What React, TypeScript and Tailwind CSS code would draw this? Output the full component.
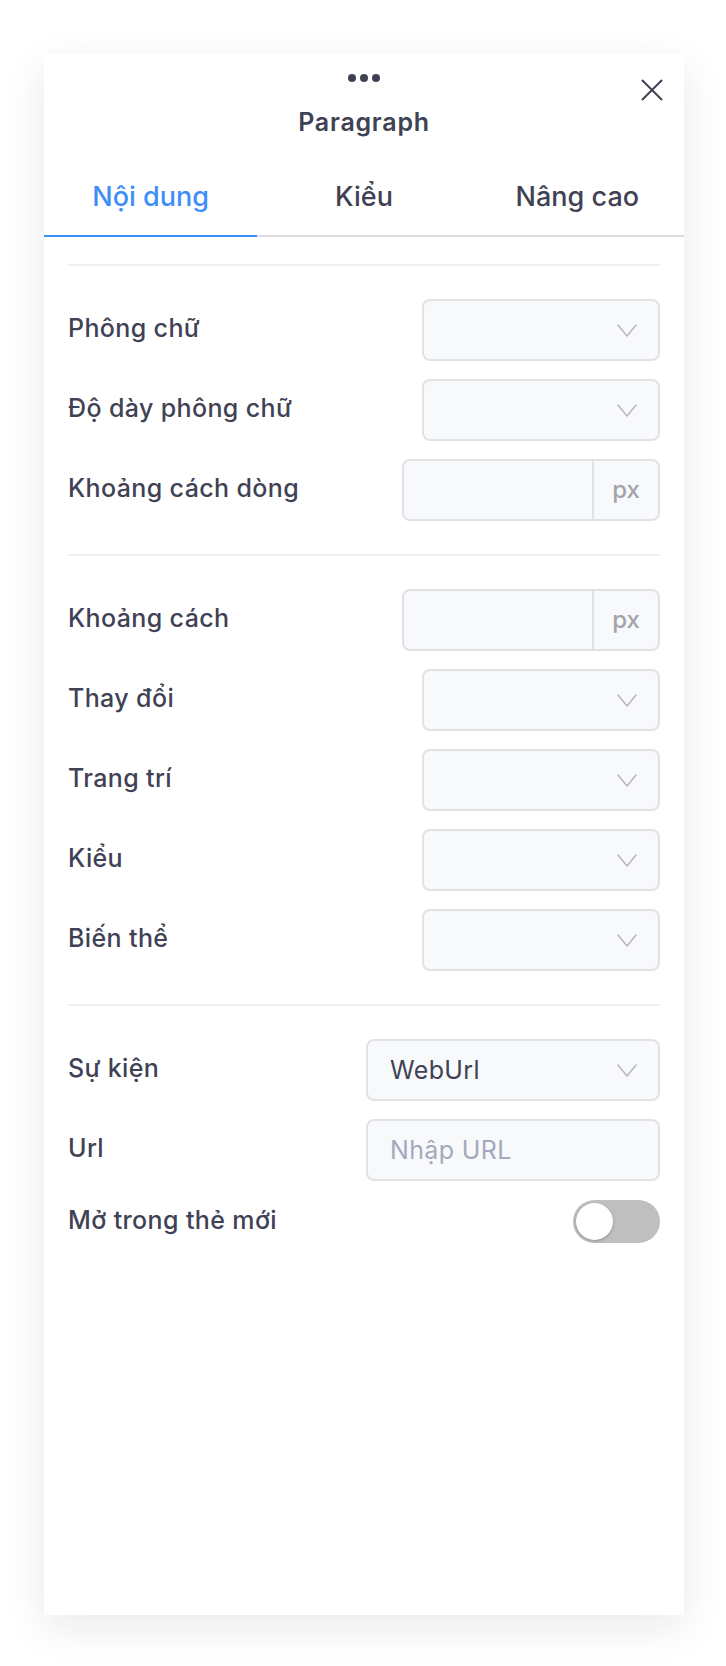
import React from "react";

const Chevron = () => (
  <svg width="20" height="13" viewBox="0 0 20 13" fill="none" className="shrink-0">
    <polyline points="1,1 10,12 19,1" stroke="#b8b9c2" strokeWidth="1.6" fill="none" strokeLinejoin="round" strokeLinecap="round" />
  </svg>
);

const labelCls = "text-[25px] tracking-[0.015em] font-medium text-[#3f4254] leading-[32px] pb-[4px]";

const SelectBox = ({ w, value }: { w: string; value?: string }) => (
  <div className={`${w} h-[62px] rounded-[8px] border-2 border-[#e1e2e6] bg-[#f8f9fb] flex items-center justify-between pl-[22px] pr-[21px]`}>
    <span className="text-[25px] tracking-[0.015em] text-[#3f4254] leading-[32px]">{value ?? ""}</span>
    <Chevron />
  </div>
);

const PxInput = () => (
  <div className="w-[258px] h-[62px] rounded-[8px] border-2 border-[#e1e2e6] bg-[#f8f9fb] flex">
    <div className="flex-1" />
    <div className="w-[66px] border-l-2 border-[#e1e2e6] flex items-center justify-center text-[24px] font-medium text-[#a3a4aa] leading-[32px]">
      px
    </div>
  </div>
);

const Row = ({ label, children }: { label: string; children: React.ReactNode }) => (
  <div className="flex items-center justify-between">
    <span className={labelCls}>{label}</span>
    {children}
  </div>
);

const Divider = () => <div className="h-[2px] bg-[#eeeff2]" />;

export default function App() {
  return (
    <div
      className="min-h-screen bg-white pt-[54px] pl-[44px] pb-[51px]"
      style={{ fontFamily: "Inter, 'Noto Sans', sans-serif" }}
    >
      <div className="relative w-[640px] h-[1561px] bg-white shadow-[0_12px_40px_rgba(20,20,40,0.09)]">
        {/* close */}
        <button className="absolute right-[21px] top-[25px] w-[22px] h-[22px]">
          <svg width="22" height="22" viewBox="0 0 22 22" fill="none">
            <line x1="1.5" y1="1.5" x2="20.5" y2="20.5" stroke="#3f4254" strokeWidth="2" strokeLinecap="round" />
            <line x1="20.5" y1="1.5" x2="1.5" y2="20.5" stroke="#3f4254" strokeWidth="2" strokeLinecap="round" />
          </svg>
        </button>

        {/* header */}
        <div className="flex flex-col items-center pt-[20px]">
          <div className="flex gap-[4px] h-[8px]">
            <span className="w-[8px] h-[8px] rounded-full bg-[#3f4254]" />
            <span className="w-[8px] h-[8px] rounded-full bg-[#3f4254]" />
            <span className="w-[8px] h-[8px] rounded-full bg-[#3f4254]" />
          </div>
          <div className="mt-[24px] text-[25px] tracking-[0.03em] leading-[32px] font-semibold text-[#3f4254]">Paragraph</div>
        </div>

        {/* tabs */}
        <div className="mt-[41px] grid grid-cols-3 border-b-2 border-[#dcdcdf]">
          <div className="text-center text-[27px] leading-[36px] font-medium text-[#3e8ef7] pb-[20px] -mb-[2px] border-b-2 border-[#3e8ef7]">
            Nội dung
          </div>
          <div className="text-center text-[27px] leading-[36px] font-medium text-[#3f4254] pb-[20px]">Kiểu</div>
          <div className="text-center text-[27px] leading-[36px] font-medium text-[#3f4254] pb-[20px]">Nâng cao</div>
        </div>

        {/* content */}
        <div className="px-[24px] pt-[27px] flex flex-col">
          <Divider />
          <div className="flex flex-col gap-[18px] py-[33px]">
            <Row label="Phông chữ">
              <SelectBox w="w-[238px]" />
            </Row>
            <Row label="Độ dày phông chữ">
              <SelectBox w="w-[238px]" />
            </Row>
            <Row label="Khoảng cách dòng">
              <PxInput />
            </Row>
          </div>
          <Divider />
          <div className="flex flex-col gap-[18px] py-[33px]">
            <Row label="Khoảng cách">
              <PxInput />
            </Row>
            <Row label="Thay đổi">
              <SelectBox w="w-[238px]" />
            </Row>
            <Row label="Trang trí">
              <SelectBox w="w-[238px]" />
            </Row>
            <Row label="Kiểu">
              <SelectBox w="w-[238px]" />
            </Row>
            <Row label="Biến thể">
              <SelectBox w="w-[238px]" />
            </Row>
          </div>
          <Divider />
          <div className="flex flex-col gap-[18px] pt-[33px]">
            <Row label="Sự kiện">
              <SelectBox w="w-[294px]" value="WebUrl" />
            </Row>
            <Row label="Url">
              <div className="w-[294px] h-[62px] rounded-[8px] border-2 border-[#e1e2e6] bg-[#f8f9fb] flex items-center pl-[22px]">
                <span className="text-[25px] tracking-[0.015em] leading-[32px] text-[#a5a8bd]">Nhập URL</span>
              </div>
            </Row>
            <div className="flex items-center justify-between mt-[1px]">
              <span className={labelCls}>Mở trong thẻ mới</span>
              <div className="w-[87px] h-[43px] rounded-full bg-[#bfbfbf] flex items-center pl-[3px]">
                <div className="w-[37px] h-[37px] rounded-full bg-white shadow-[0_1px_3px_rgba(0,0,0,0.25)]" />
              </div>
            </div>
          </div>
        </div>
      </div>
    </div>
  );
}
